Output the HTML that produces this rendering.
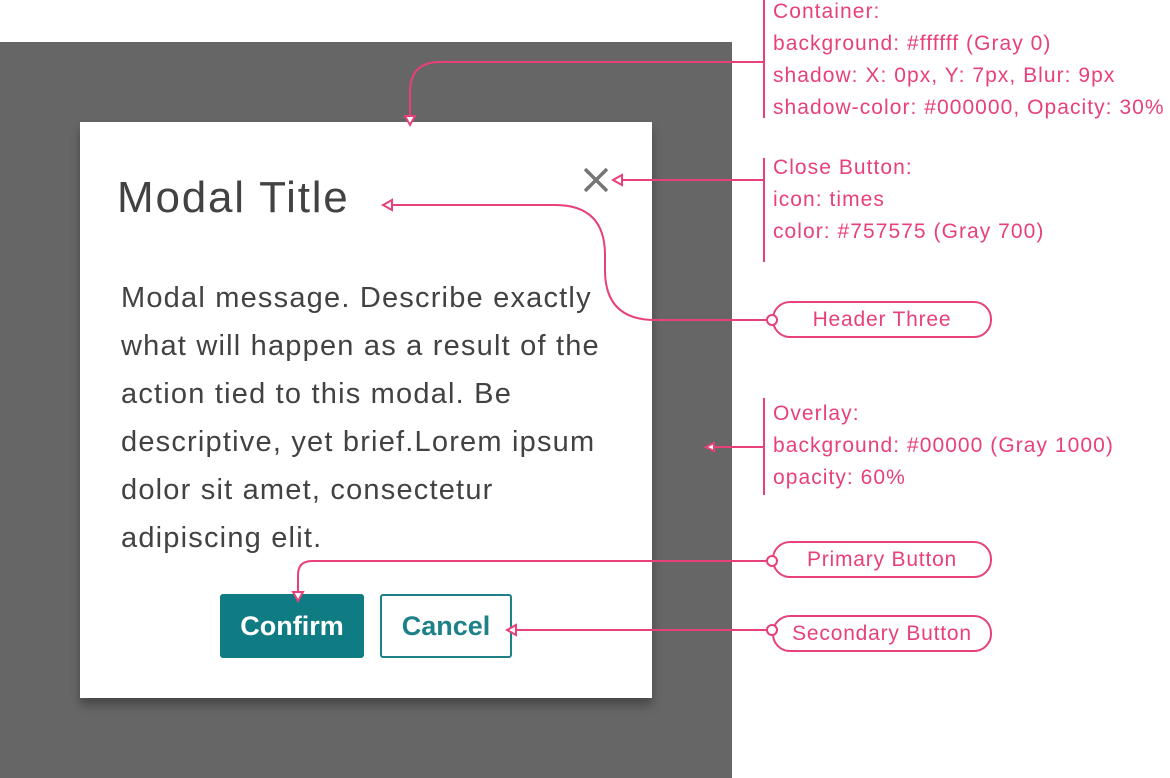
<!DOCTYPE html>
<html><head><style>
body{margin:0;width:1170px;height:778px;background:#fff;position:relative;overflow:hidden;font-family:"Liberation Sans",sans-serif}
.ov{position:absolute;left:0;top:42px;width:732px;height:736px;background:#666}
.modal{position:absolute;left:80px;top:122px;width:572px;height:576px;background:#fff;box-shadow:0 7px 9px rgba(0,0,0,.3)}
.t{position:absolute;left:117px;top:172px;font-size:44px;color:#424242;line-height:52px;letter-spacing:1.8px}
.msg{position:absolute;left:121px;top:274px;width:540px;font-size:29px;line-height:48px;color:#424242;letter-spacing:1.2px;white-space:nowrap}
.b1{position:absolute;left:220px;top:594px;width:144px;height:64px;background:#0e7c82;border-radius:3px;color:#fff;font-size:27px;font-weight:bold;text-align:center;line-height:64px}
.b2{position:absolute;left:380px;top:594px;width:128px;height:60px;border:2px solid #1e8188;border-radius:3px;color:#1e8188;font-size:27px;font-weight:bold;text-align:center;line-height:60px}
.a{position:absolute;left:773px;color:#e8407a;font-size:21px;line-height:32px;white-space:nowrap;letter-spacing:1.05px}
.pill{position:absolute;left:772px;width:216px;height:33px;border:2px solid #e8407a;border-radius:18px;color:#e8407a;font-size:21px;text-align:center;line-height:33px;letter-spacing:0.8px}
</style></head><body>
<div class="ov"></div>
<div class="modal"></div>
<div class="t">Modal Title</div>
<div class="msg">Modal message. Describe exactly<br>what will happen as a result of the<br>action tied to this modal. Be<br>descriptive, yet brief.Lorem ipsum<br>dolor sit amet, consectetur<br>adipiscing elit.</div>
<div class="b1">Confirm</div>
<div class="b2">Cancel</div>
<div class="a" style="top:-4px">Container:<br>background: #ffffff (Gray 0)<br>shadow: X: 0px, Y: 7px, Blur: 9px<br>shadow-color: #000000, Opacity: 30%</div>
<div class="a" style="top:152px">Close Button:<br>icon: times<br>color: #757575 (Gray 700)</div>
<div class="a" style="top:398px">Overlay:<br>background: #00000 (Gray 1000)<br>opacity: 60%</div>
<div class="pill" style="top:301px">Header Three</div>
<div class="pill" style="top:541px">Primary Button</div>
<div class="pill" style="top:615px">Secondary Button</div>
<svg width="1170" height="778" style="position:absolute;left:0;top:0" fill="none">
<path d="M585 169 L607 191 M607 169 L585 191" stroke="#757575" stroke-width="3.5"/>
<g stroke="#e8407a" stroke-width="2">
<path d="M764 0V118M764 158V262M764 398V495"/>
<path d="M764 62H440Q410 62 410 92V116"/>
<path d="M405 116L415 116L410 125Z" fill="#fff"/>
<path d="M764 180H622"/>
<path d="M622 175L622 185L613 180Z" fill="#fff"/>
<path d="M766 320H655Q605 320 605 270V255Q605 205 555 205H392"/>
<path d="M392 200L392 210L383 205Z" fill="#fff"/>
<path d="M764 447H714"/>
<path d="M714 443L714 451L706 447Z" fill="#fff"/>
<path d="M766 561H312Q298 561 298 575V592"/>
<path d="M293 592L303 592L298 601Z" fill="#fff"/>
<path d="M766 630H516"/>
<path d="M516 625L516 635L507 630Z" fill="#fff"/>
<circle cx="772" cy="320" r="5" fill="#fff"/>
<circle cx="772" cy="561" r="5" fill="#fff"/>
<circle cx="772" cy="630" r="5" fill="#fff"/>
</g>
</svg>
</body></html>
